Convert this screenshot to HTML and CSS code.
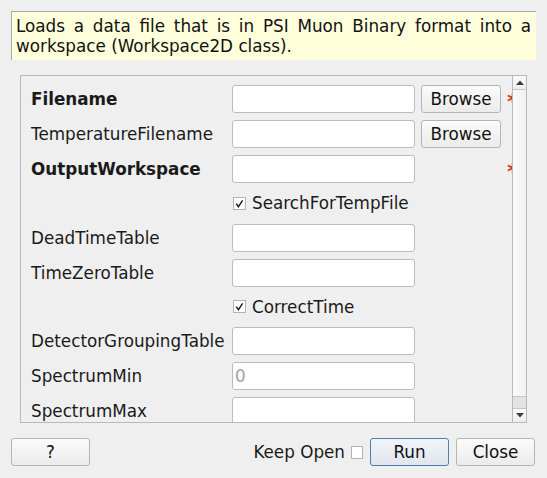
FILE: index.html
```html
<!DOCTYPE html>
<html>
<head>
<meta charset="utf-8">
<link rel="stylesheet" href="styles.css">
</head>
<body>
<div class="desc">Loads a data file that is in PSI Muon Binary format into a workspace (Workspace2D class).</div>
<div class="scroll">
  <div class="viewport">
    <div class="form">
      <div class="row"><span class="lbl bold">Filename</span><div class="input"></div><button class="btn">Browse</button><span class="req">*</span></div>
      <div class="row"><span class="lbl">TemperatureFilename</span><div class="input"></div><button class="btn">Browse</button><span></span></div>
      <div class="row"><span class="lbl bold">OutputWorkspace</span><div class="input"></div><span></span><span class="req">*</span></div>
      <div class="row cbrow"><span></span><span class="cbwrap"><span class="cb"><svg width="11" height="11" viewBox="0 0 11 11"><path d="M2.2 5.6 L4.4 8.6 L8.6 2.4" fill="none" stroke="#1e1e1e" stroke-width="1.5"/></svg></span>SearchForTempFile</span></div>
      <div class="row"><span class="lbl">DeadTimeTable</span><div class="input"></div></div>
      <div class="row"><span class="lbl">TimeZeroTable</span><div class="input"></div></div>
      <div class="row cbrow"><span></span><span class="cbwrap"><span class="cb"><svg width="11" height="11" viewBox="0 0 11 11"><path d="M2.2 5.6 L4.4 8.6 L8.6 2.4" fill="none" stroke="#1e1e1e" stroke-width="1.5"/></svg></span>CorrectTime</span></div>
      <div class="row"><span class="lbl">DetectorGroupingTable</span><div class="input"></div></div>
      <div class="row"><span class="lbl">SpectrumMin</span><div class="input"><span class="ph">0</span></div></div>
      <div class="row"><span class="lbl">SpectrumMax</span><div class="input"></div></div>
    </div>
  </div>
  <div class="sbar">
    <div class="sb-btn sb-up"><svg width="8" height="5" viewBox="0 0 8 5"><path d="M0 5 L4 0.5 L8 5 Z" fill="#3c3c3c"/></svg></div>
    <div class="sb-handle"></div>
    <div class="sb-groove"></div>
    <div class="sb-btn sb-down"><svg width="8" height="5" viewBox="0 0 8 5"><path d="M0 0 L8 0 L4 4.5 Z" fill="#3c3c3c"/></svg></div>
  </div>
</div>
<div class="footer">
  <button class="btn fbtn">?</button>
  <span class="spacer"></span>
  <span class="keep">Keep Open</span>
  <span class="cb keepcb"></span>
  <button class="btn fbtn run">Run</button>
  <button class="btn fbtn">Close</button>
</div>
</body>
</html>
```
FILE: styles.css
```css
body {
  margin: 0;
  width: 547px;
  height: 478px;
  overflow: hidden;
  background: #efefef;
  font-family: "DejaVu Sans", sans-serif;
  font-size: 16.8px;
  color: #1a1a1a;
}

.desc {
  margin: 11px 11px 0 11px;
  height: 38px;
  padding: 5px 5px 5px 4px;
  background: #ffffdc;
  border-top: 1px solid #a8a8a8;
  border-left: 1px solid #a8a8a8;
  line-height: 19.5px;
  text-align: justify;
  color: #111;
}

.scroll {
  margin: 15px 0 0 20px;
  width: 507px;
  height: 348px;
  box-sizing: border-box;
  border: 1px solid #b9b9b9;
  display: flex;
}

.viewport {
  flex: 1;
  overflow: hidden;
}

.form {
  padding: 9px 0 0 10px;
  display: flex;
  flex-direction: column;
  gap: 7px;
}

.row {
  display: grid;
  grid-template-columns: 195px 183px 80px 20px;
  column-gap: 6px;
  align-items: center;
  height: 28px;
  white-space: nowrap;
}

.row.cbrow {
  height: 26.5px;
}

.lbl.bold {
  font-weight: bold;
}

.input {
  height: 28px;
  box-sizing: border-box;
  background: #fff;
  border: 1px solid #bcbcbc;
  border-radius: 3px;
  display: flex;
  align-items: center;
  padding-left: 2px;
}

.ph {
  color: #a2a2a2;
}

.btn {
  height: 28px;
  box-sizing: border-box;
  border: 1px solid #b5b5b5;
  border-radius: 3px;
  background: linear-gradient(#fbfbfb, #ebebeb);
  font: inherit;
  color: #111;
  padding: 0;
}

.req {
  color: #c0392b;
  font-weight: bold;
  font-size: 22px;
  line-height: 1;
  margin-left: 0;
  margin-top: 6px;
}

.cbwrap {
  grid-column: 2 / span 3;
  display: flex;
  align-items: center;
  gap: 6px;
}

.cb {
  width: 13px;
  height: 13px;
  box-sizing: border-box;
  border: 1px solid #b3b3b3;
  background: #fff;
  display: flex;
  align-items: center;
  justify-content: center;
  margin-left: 1px;
}

.sbar {
  width: 14px;
  box-sizing: border-box;
  border-left: 1px solid #b9b9b9;
  display: flex;
  flex-direction: column;
  background: #e3e3e3;
}

.sb-btn {
  height: 14px;
  box-sizing: border-box;
  background: linear-gradient(#fafafa, #eeeeee);
  display: flex;
  align-items: center;
  justify-content: center;
}

.sb-up {
  border-bottom: 1px solid #c6c6c6;
}

.sb-down {
  border-top: 1px solid #c6c6c6;
}

.sb-handle {
  height: 307px;
  box-sizing: border-box;
  border-bottom: 1px solid #c6c6c6;
  background: linear-gradient(to right, #fbfbfb, #f1f1f1);
}

.sb-groove {
  flex: 1;
}

.footer {
  margin: 15px 12px 0 11px;
  height: 28px;
  display: flex;
  align-items: center;
}

.fbtn {
  width: 79px;
}

.spacer {
  flex: 1;
}

.keep {
  margin-right: 6px;
}

.keepcb {
  width: 12px;
  height: 13px;
  margin-left: 0;
  margin-right: 7px;
}

.run {
  margin-right: 7px;
  border-color: #4d7fae;
  background: linear-gradient(#f1f5f9, #dfe6ec);
}
```
